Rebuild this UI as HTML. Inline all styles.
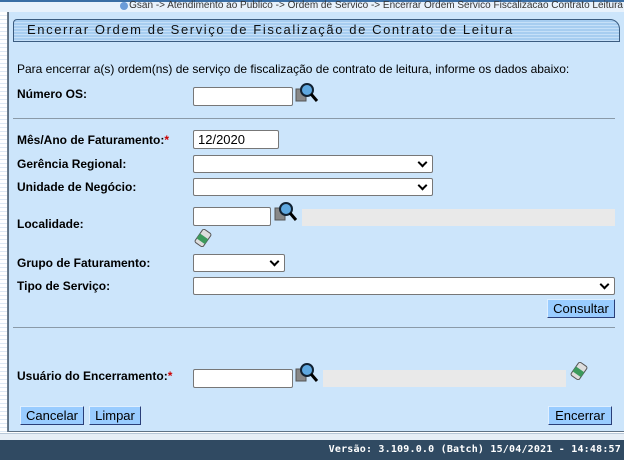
<!DOCTYPE html>
<html><head><meta charset="utf-8"><style>
body{margin:0;width:624px;height:460px;overflow:hidden;background:#fff;font-family:"Liberation Sans",Arial,sans-serif;font-size:12px;position:relative}
.a{position:absolute}
.lbl{position:absolute;left:17px;font-weight:bold;font-size:12px;color:#000}
.in{position:absolute;height:19px;border:1px solid #777;border-radius:2px;background:#fff;box-sizing:border-box;font-size:13px;padding:1px 4px}
.sel{position:absolute;height:18px;border:1px solid #777;border-radius:2px;background:#fff;box-sizing:border-box}
.sel:after{content:"";position:absolute;right:6px;top:3px;width:5px;height:5px;border-right:2px solid #000;border-bottom:2px solid #000;transform:rotate(45deg)}
.gray{position:absolute;height:17px;background:#e9e9e9}
.btn{position:absolute;height:19px;background:#99ccff;border:1px solid #2a3e78;border-top-color:#dfefff;border-left-color:#dfefff;box-sizing:border-box;font-size:13px;text-align:center;line-height:17px;color:#000}
hr.s{position:absolute;margin:0;border:0;border-top:1px solid #8a9aa8;height:0}
</style></head><body>
<div class="a" style="left:0;top:0;width:624px;height:2px;background:#3a6ea5"></div>
<div class="a" style="left:0;top:2px;width:624px;height:10px;background:#e8f2fc"></div>
<div class="a" style="right:1px;top:0px;font-size:10px;color:#333;white-space:nowrap">Gsan -&gt; Atendimento ao Publico -&gt; Ordem de Servico -&gt; Encerrar Ordem Servico Fiscalizacao Contrato Leitura</div>
<div class="a" style="left:120px;top:2px;width:8px;height:8px;border-radius:50%;background:#6a9bd8"></div>
<div class="a" style="left:0;top:12px;width:7px;height:420px;background:repeating-linear-gradient(#fff 0 3px,#dde8f4 3px 4px);border-right:1px solid #6a7b8c"></div>
<div class="a" style="left:8px;top:12px;width:616px;height:420px;background:#cce5fb;border-left:1px solid #5e7184;border-bottom:1px solid #5e7184;box-sizing:border-box"></div>
<div class="a" style="left:13px;top:19px;width:607px;height:23px;border:1px solid #3b5c80;border-radius:4px 10px 0 0;box-sizing:border-box;background:repeating-linear-gradient(#a7cdf0 0 2px,#c6e0f8 2px 3px)"></div>
<div class="a" style="left:27px;top:22px;font-size:13px;letter-spacing:1.6px;color:#111">Encerrar Ordem de Serviço de Fiscalização de Contrato de Leitura</div>
<div class="a" style="left:17px;top:62px;font-size:12px">Para encerrar a(s) ordem(ns) de serviço de fiscalização de contrato de leitura, informe os dados abaixo:</div>
<div class="lbl" style="top:87px">Número OS:</div>
<div class="in" style="left:193px;top:87px;width:100px"></div>
<svg class="a" style="left:295px;top:82px" width="24" height="22"><rect x="1" y="7" width="10" height="12" fill="#888" stroke="#555"/><circle cx="12" cy="8" r="6" fill="#5fa8e0" stroke="#123" stroke-width="2"/><line x1="16" y1="12" x2="22" y2="19" stroke="#000" stroke-width="3"/></svg>
<hr class="s" style="left:13px;top:118px;width:602px">
<div class="lbl" style="top:133px">Mês/Ano de Faturamento:<span style="color:#c00">*</span></div>
<div class="in" style="left:193px;top:130px;width:86px">12/2020</div>
<div class="lbl" style="top:157px">Gerência Regional:</div>
<div class="sel" style="left:193px;top:155px;width:240px"></div>
<div class="lbl" style="top:180px">Unidade de Negócio:</div>
<div class="sel" style="left:193px;top:178px;width:240px"></div>
<div class="lbl" style="top:217px">Localidade:</div>
<div class="in" style="left:193px;top:207px;width:78px"></div>
<svg class="a" style="left:274px;top:201px" width="24" height="22"><rect x="1" y="7" width="10" height="12" fill="#888" stroke="#555"/><circle cx="12" cy="8" r="6" fill="#5fa8e0" stroke="#123" stroke-width="2"/><line x1="16" y1="12" x2="22" y2="19" stroke="#000" stroke-width="3"/></svg>
<div class="gray" style="left:302px;top:209px;width:313px"></div>
<svg class="a" style="left:194px;top:229px" width="18" height="18"><g transform="rotate(35 9 9)"><rect x="4" y="1" width="10" height="16" rx="2" fill="#ddd" stroke="#555"/><rect x="4" y="7" width="10" height="6" fill="#3c9a5c"/></g></svg>
<div class="lbl" style="top:256px">Grupo de Faturamento:</div>
<div class="sel" style="left:193px;top:254px;width:92px"></div>
<div class="lbl" style="top:279px">Tipo de Serviço:</div>
<div class="sel" style="left:193px;top:277px;width:422px"></div>
<div class="btn" style="left:547px;top:299px;width:68px">Consultar</div>
<hr class="s" style="left:13px;top:327px;width:602px">
<div class="lbl" style="top:369px">Usuário do Encerramento:<span style="color:#c00">*</span></div>
<div class="in" style="left:193px;top:369px;width:100px"></div>
<svg class="a" style="left:295px;top:362px" width="24" height="22"><rect x="1" y="7" width="10" height="12" fill="#888" stroke="#555"/><circle cx="12" cy="8" r="6" fill="#5fa8e0" stroke="#123" stroke-width="2"/><line x1="16" y1="12" x2="22" y2="19" stroke="#000" stroke-width="3"/></svg>
<div class="gray" style="left:323px;top:370px;width:243px"></div>
<svg class="a" style="left:570px;top:362px" width="18" height="18"><g transform="rotate(35 9 9)"><rect x="4" y="1" width="10" height="16" rx="2" fill="#ddd" stroke="#555"/><rect x="4" y="7" width="10" height="6" fill="#3c9a5c"/></g></svg>
<div class="btn" style="left:20px;top:406px;width:64px">Cancelar</div>
<div class="btn" style="left:89px;top:406px;width:52px">Limpar</div>
<div class="btn" style="left:548px;top:406px;width:64px">Encerrar</div>
<div class="a" style="left:0;top:433px;width:624px;height:7px;background:#e6eef6;border-top:1px solid #b8c8d8"></div>
<div class="a" style="left:0;top:440px;width:624px;height:20px;background:#304a62"></div>
<div class="a" style="right:3px;top:444px;color:#fff;font-weight:bold;font-size:10px;letter-spacing:0.2px;font-family:'DejaVu Sans Mono',monospace">Versão: 3.109.0.0 (Batch) 15/04/2021 - 14:48:57</div>
</body></html>
